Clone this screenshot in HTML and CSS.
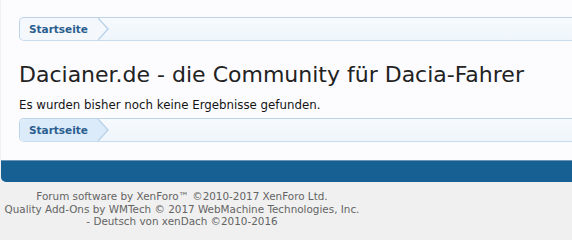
FILE: index.html
```html
<!DOCTYPE html>
<html lang="de">
<head>
<meta charset="utf-8">
<title>Dacianer.de</title>
<link rel="stylesheet" href="styles.css">
</head>
<body>
<div class="page">
  <div class="content">
    <nav class="breadcrumb">
      <span class="crumb"><a href="#">Startseite</a><span class="arrow"></span></span>
    </nav>
    <h1 class="title">Dacianer.de - die Community für Dacia-Fahrer</h1>
    <p class="message">Es wurden bisher noch keine Ergebnisse gefunden.</p>
    <nav class="breadcrumb bottom">
      <span class="crumb"><a href="#">Startseite</a><span class="arrow"></span></span>
    </nav>
  </div>
  <div class="footer-bar"></div>
  <div class="legal">
    <div class="copyright">Forum software by XenForo™ ©2010-2017 XenForo Ltd.<br>Quality Add-Ons by WMTech © 2017 WebMachine Technologies, Inc.<br>- Deutsch von xenDach ©2010-2016</div>
  </div>
</div>
</body>
</html>
```
FILE: styles.css
```css
html, body {
  margin: 0;
  padding: 0;
}
body {
  background: #f0f0f0;
  font-family: "DejaVu Sans", Verdana, sans-serif;
  font-size: 11px;
  color: #141414;
  width: 572px;
  height: 240px;
  overflow: hidden;
}
.page {
  padding-left: 1px;
}
.content {
  background: #fcfcff;
  padding: 17px 0 18px 18px;
}
.breadcrumb {
  display: flex;
  height: 22px;
  border: 1px solid #bcd3e9;
  border-bottom-color: #c8dcef;
  border-right: none;
  border-radius: 5px 0 0 5px;
  background: linear-gradient(#f7fafd, #eef5fb);
}
.crumb {
  position: relative;
  display: flex;
  align-items: center;
  padding: 0 10px 0 9px;
  border-radius: 5px 0 0 5px;
  background: #f4f8fd;
}
.crumb a {
  color: #2b5e8e;
  font-weight: bold;
  text-decoration: none;
  font-size: 10.5px;
}
.bottom .crumb {
  background: #dcebfa;
}
.arrow {
  position: absolute;
  right: -11px;
  top: -1px;
  width: 0;
  height: 0;
  border-style: solid;
  border-width: 12px 0 12px 11px;
  border-color: transparent transparent transparent #bcd3e9;
}
.arrow::after {
  content: "";
  position: absolute;
  left: -12px;
  top: -11px;
  border-style: solid;
  border-width: 11px 0 11px 10px;
  border-color: transparent transparent transparent #f4f8fd;
}
.bottom .arrow::after {
  border-left-color: #dcebfa;
}
.title {
  margin: 21px 0 0;
  font-size: 22px;
  font-weight: normal;
  color: #222;
  line-height: 26px;
}
.message {
  margin: 10px 0 6px;
  font-size: 11.8px;
  line-height: 14px;
}
.footer-bar {
  height: 21px;
  background: #176093;
  border-top: 1px solid #6d95b8;
  border-radius: 0 0 0 5px;
}
.legal {
  width: 362px;
  padding-top: 8px;
}
.copyright {
  text-align: center;
  color: #646464;
  font-size: 10.4px;
  line-height: 12.5px;
}
```
